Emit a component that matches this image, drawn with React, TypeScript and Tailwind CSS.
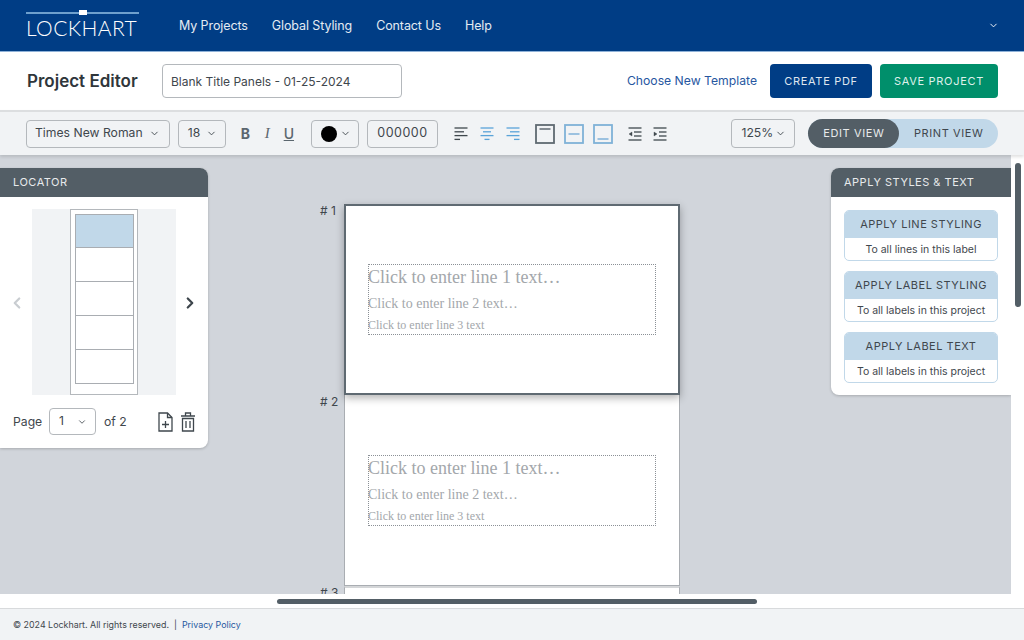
import { ChevronDown, ChevronLeft, ChevronRight } from 'lucide-react';

const navLinks = ['My Projects', 'Global Styling', 'Contact Us', 'Help'];

const applyCards = [
  { title: 'APPLY LINE STYLING', note: 'To all lines in this label' },
  { title: 'APPLY LABEL STYLING', note: 'To all labels in this project' },
  { title: 'APPLY LABEL TEXT', note: 'To all labels in this project' },
];

function AlignIcon({ lines, color }: { lines: number[][]; color: string }) {
  return (
    <svg width="14" height="14" viewBox="0 0 14 14" stroke={color} strokeWidth="1.3">
      {lines.map((l, i) => (
        <line key={i} x1={l[0]} x2={l[1]} y1={1 + i * 3.8} y2={1 + i * 3.8} />
      ))}
    </svg>
  );
}

function BoxIcon({ y, color }: { y: number; color: string }) {
  return (
    <svg width="20" height="20" viewBox="0 0 20 20" fill="none" stroke={color}>
      <rect x="1" y="1" width="18" height="18" strokeWidth="1.8" />
      <line x1="4.5" x2="15.5" y1={y} y2={y} strokeWidth="1.5" />
    </svg>
  );
}

function IndentIcon({ flip }: { flip?: boolean }) {
  return (
    <svg width="14" height="14" viewBox="0 0 14 14" stroke="#3f474d" strokeWidth="1.3" fill="#3f474d">
      <line x1="0.5" x2="13.5" y1="1" y2="1" />
      <line x1="6" x2="13.5" y1="5" y2="5" />
      <line x1="6" x2="13.5" y1="9" y2="9" />
      <line x1="0.5" x2="13.5" y1="13" y2="13" />
      {flip ? <path d="M1 5 L4 7 L1 9 Z" strokeWidth="0.4" /> : <path d="M4 5 L1 7 L4 9 Z" strokeWidth="0.4" />}
    </svg>
  );
}

function LabelCard({ num, active }: { num: number; active?: boolean }) {
  return (
    <div className="flex">
      <div className="w-[27px] shrink-0 pl-[3px] text-[12px] leading-[14px] text-[#3f474d]"># {num}</div>
      <div
        className={
          active
            ? 'relative z-10 h-[191px] w-[336px] border-2 border-[#5f6a72] bg-white pl-[22px] pt-[58px] shadow-[0_3px_8px_rgba(0,0,0,0.3)]'
            : 'h-[191px] w-[336px] border border-t-0 border-[#a9adb2] bg-white pl-[23px] pt-[60px]'
        }
      >
        <div className="h-[71px] w-[288px] border border-dotted border-[#8b9096] font-['Liberation_Serif',serif] leading-none text-[#a3a7ab]">
          <div className="-ml-[1px] mt-[1px] text-[18px] leading-[22px]">Click to enter line 1 text…</div>
          <div className="-ml-[1px] mt-[7px] text-[14px] leading-[18px]">Click to enter line 2 text…</div>
          <div className="-ml-[1px] mt-[5px] text-[12px] leading-[15px]">Click to enter line 3 text</div>
        </div>
      </div>
    </div>
  );
}

export default function App() {
  return (
    <div className="flex h-screen w-full flex-col overflow-hidden bg-white font-['Inter',sans-serif] text-[#3f474d]">
      {/* Top nav */}
      <header className="flex h-[52px] shrink-0 items-center border-b border-[#8fb2d8] bg-[#003d85] pl-[26px] pr-[25px]">
        <div className="flex w-[113px] flex-col">
          <div className="relative mt-[1px] h-[2px] w-full bg-[#6ea0cd]">
            <div className="absolute left-[53px] top-[-2px] h-[5px] w-[8px] bg-white" />
          </div>
          <div className="mt-[2px] whitespace-nowrap font-['Lato',sans-serif] text-[21px] font-light leading-[24px] tracking-[0.4px] text-white">LOCKHART</div>
        </div>
        <nav className="ml-[40px] mt-[1px] flex gap-[24px] text-[12.5px] tracking-[-0.1px] text-[#e4ebf3]">
          {navLinks.map((link) => (
            <span key={link}>{link}</span>
          ))}
        </nav>
        <ChevronDown className="ml-auto h-[11px] w-[11px] text-white" strokeWidth={2} />
      </header>

      {/* Title row */}
      <div className="flex h-[58px] shrink-0 items-center pl-[27px] pr-[26px]">
        <h1 className="mt-[2px] w-[135px] text-[17px] font-semibold text-[#2f363b]">Project Editor</h1>
        <input
          readOnly
          value="Blank Title Panels - 01-25-2024"
          className="h-[34px] w-[240px] rounded-[4px] border border-[#b4b8bc] px-[8px] font-['Inter',sans-serif] text-[12px] text-[#3f474d] outline-none"
        />
        <a className="ml-auto text-[12.2px] text-[#27579f]">Choose New Template</a>
        <button className="ml-[13px] h-[34px] w-[102px] rounded-[4px] bg-[#003d85] text-[11px] font-normal tracking-[0.7px] text-[#dfe6ef]">CREATE PDF</button>
        <button className="ml-[8px] h-[34px] w-[118px] rounded-[4px] bg-[#008f6b] text-[11px] font-normal tracking-[0.7px] text-[#dff1ec]">SAVE PROJECT</button>
      </div>

      {/* Toolbar */}
      <div className="relative z-20 flex h-[45px] shrink-0 items-center border-t-2 border-[#dcdee0] bg-[#f1f3f5] pl-[26px] pr-[26px] shadow-[0_2px_3px_rgba(0,0,0,0.12)]">
        <div className="flex h-[28px] w-[144px] items-center justify-between rounded-[4px] border border-[#b4b8bc] pl-[8px] pr-[9px] text-[12.2px]">
          Times New Roman
          <ChevronDown className="h-[11px] w-[11px]" />
        </div>
        <div className="ml-[8px] flex h-[28px] w-[48px] items-center justify-between rounded-[4px] border border-[#b4b8bc] pl-[9px] pr-[8px] text-[12.2px]">
          18
          <ChevronDown className="h-[11px] w-[11px]" />
        </div>
        <span className="ml-[15px] w-[24px] text-[14px] font-bold text-[#5b666e]">B</span>
        <span className="w-[19px] font-['Liberation_Serif',serif] text-[15px] italic text-[#5b666e]">I</span>
        <span className="w-[27px] text-[14px] font-medium text-[#5b666e] underline">U</span>
        <div className="flex h-[28px] w-[48px] items-center rounded-[4px] border border-[#b4b8bc] pl-[9px]">
          <div className="h-[16px] w-[16px] rounded-full bg-black" />
          <ChevronDown className="ml-[3px] h-[11px] w-[11px]" />
        </div>
        <div className="ml-[8px] flex h-[28px] w-[72px] items-center justify-center rounded-[4px] border border-[#b4b8bc] text-[12.5px] tracking-[0.5px]">000000</div>
        <div className="ml-[16px] flex gap-[12px]">
          <AlignIcon color="#3f474d" lines={[[0.5, 13.5], [0.5, 10], [0.5, 13.5], [0.5, 6]]} />
          <AlignIcon color="#5aa3d8" lines={[[0.5, 13.5], [3, 11], [0.5, 13.5], [4.5, 9.5]]} />
          <AlignIcon color="#5aa3d8" lines={[[0.5, 13.5], [4, 13.5], [0.5, 13.5], [8, 13.5]]} />
        </div>
        <div className="ml-[15px] flex gap-[9px]">
          <BoxIcon y={5} color="#5f6a72" />
          <BoxIcon y={10} color="#7fb2d8" />
          <BoxIcon y={15} color="#7fb2d8" />
        </div>
        <div className="ml-[15px] flex gap-[11px]">
          <IndentIcon />
          <IndentIcon flip />
        </div>
        <div className="ml-[64px] flex h-[29px] w-[64px] items-center justify-between rounded-[4px] border border-[#b4b8bc] pl-[9px] pr-[8px] text-[12.2px]">
          125%
          <ChevronDown className="h-[11px] w-[11px]" />
        </div>
        <div className="ml-[13px] flex h-[29px] w-[190px] rounded-full bg-[#c1d8e9] text-[11px] font-normal tracking-[0.6px]">
          <div className="flex w-[91px] items-center justify-center rounded-full bg-[#535e66] text-[#e8eaec]">EDIT VIEW</div>
          <div className="flex flex-1 items-center justify-center text-[#3f474d]">PRINT VIEW</div>
        </div>
      </div>

      {/* Workspace */}
      <div className="flex min-h-0 flex-1">
        <main className="flex min-w-0 flex-1 overflow-hidden bg-[#d1d5db]">
          {/* Locator */}
          <aside className="mt-[13px] h-[280px] w-[208px] shrink-0 overflow-hidden rounded-r-[8px] bg-white shadow-[0_1px_3px_rgba(0,0,0,0.2)]">
            <div className="flex h-[29px] items-center bg-[#535e66] pl-[13px] text-[11px] font-normal tracking-[0.5px] text-[#e8eaec]">LOCATOR</div>
            <div className="flex items-center justify-between pl-[8px] pr-[9px] pt-[12px]">
              <ChevronLeft className="mt-[2px] h-[18px] w-[18px] text-[#c9cdd1]" strokeWidth={3} />
              <div className="flex h-[186px] w-[144px] justify-center bg-[#f1f3f5]">
                <div className="flex w-[68px] flex-col border border-[#b4b8bc] bg-white pl-[4px] pr-[3px] pt-[4px]">
                  <div className="h-[34px] border border-[#a9adb2] bg-[#c1d8e9]" />
                  <div className="h-[34px] border border-t-0 border-[#a9adb2]" />
                  <div className="h-[34px] border border-t-0 border-[#a9adb2]" />
                  <div className="h-[34px] border border-t-0 border-[#a9adb2]" />
                  <div className="h-[34px] border border-t-0 border-[#a9adb2]" />
                </div>
              </div>
              <ChevronRight className="mt-[2px] h-[18px] w-[18px] text-[#3f474d]" strokeWidth={3} />
            </div>
            <div className="mt-[13px] flex items-center pl-[13px] pr-[13px] text-[12.2px]">
              <span className="mt-[2px] w-[36px]">Page</span>
              <div className="flex h-[27px] w-[47px] items-center justify-between rounded-[4px] border border-[#b4b8bc] pl-[9px] pr-[8px]">
                1
                <ChevronDown className="h-[10px] w-[10px]" />
              </div>
              <span className="ml-[8px] mt-[2px]">of 2</span>
              <svg className="ml-auto" width="15" height="20" viewBox="0 0 15 20" fill="none" stroke="#3f474d" strokeWidth="1.3">
                <path d="M1 1 H9.5 L14 5.5 V19 H1 Z" />
                <path d="M9.5 1 V5.5 H14" />
                <path d="M7.5 9 V16 M4 12.5 H11" />
              </svg>
              <svg className="ml-[8px]" width="14" height="20" viewBox="0 0 14 20" fill="none" stroke="#3f474d" strokeWidth="1.3">
                <path d="M0 4 H14 M4.5 4 V1 H9.5 V4" />
                <path d="M1.5 6.5 H12.5 V19 H1.5 Z" />
                <path d="M5 9 V16 M9 9 V16" />
              </svg>
            </div>
          </aside>

          {/* Label sheet */}
          <section className="ml-[109px] mt-[49px] flex shrink-0 flex-col">
            <LabelCard num={1} active />
            <LabelCard num={2} />
            <div className="flex">
              <div className="w-[27px] shrink-0 pl-[3px] text-[12px] leading-[14px]"># 3</div>
              <div className="h-[20px] w-[336px] border-x border-t-2 border-[#a9adb2] border-t-[#d4d6d8] bg-white" />
            </div>
          </section>

          {/* Apply styles */}
          <aside className="ml-auto mt-[13px] h-[227px] w-[180px] shrink-0 overflow-hidden rounded-l-[8px] bg-white shadow-[0_1px_3px_rgba(0,0,0,0.2)]">
            <div className="flex h-[29px] items-center bg-[#535e66] pl-[13px] text-[11px] font-normal tracking-[0.5px] text-[#e8eaec]">APPLY STYLES &amp; TEXT</div>
            <div className="flex flex-col gap-[10px] px-[13px] pt-[13px]">
              {applyCards.map((card) => (
                <div key={card.title} className="h-[51px] overflow-hidden rounded-[5px] border border-[#c1d8e9] text-center">
                  <div className="flex h-[27px] items-center justify-center bg-[#c1d8e9] text-[11px] font-normal tracking-[0.5px]">{card.title}</div>
                  <div className="flex h-[23px] items-center justify-center text-[10.5px]">{card.note}</div>
                </div>
              ))}
            </div>
          </aside>
        </main>

        {/* Vertical scrollbar */}
        <div className="w-[13px] shrink-0 bg-white pl-[4px] pt-[8px]">
          <div className="h-[144px] w-[6px] rounded-full bg-[#535e66]" />
        </div>
      </div>

      {/* Horizontal scrollbar */}
      <div className="flex h-[14px] shrink-0 items-center bg-white pl-[277px]">
        <div className="h-[5px] w-[480px] rounded-full bg-[#535e66]" />
      </div>

      {/* Footer */}
      <footer className="flex h-[32px] shrink-0 items-center border-t border-[#d8dadc] bg-[#f1f3f5] pl-[13px] text-[8.9px] text-[#3f474d]">
        © 2024 Lockhart. All rights reserved.
        <span className="mx-[5px]">|</span>
        <a className="text-[#27579f]">Privacy Policy</a>
      </footer>
    </div>
  );
}
